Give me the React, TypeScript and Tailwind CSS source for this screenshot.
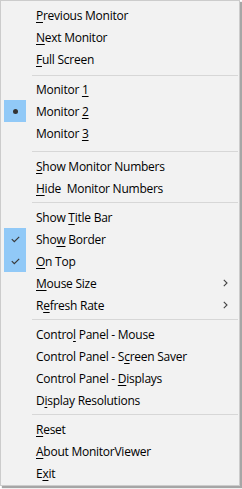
import type { ReactNode } from 'react'

type Mark = 'check' | 'dot' | null

type Item =
    | { kind: 'item'; pre: string; key: string; post: string; mark?: Mark; sub?: boolean }
    | { kind: 'sep'; top: string; bottom: string }

// mnemonic split: pre + underlined key + post
const items: Item[] = [
    { kind: 'item', pre: '', key: 'P', post: 'revious Monitor' },
    { kind: 'item', pre: '', key: 'N', post: 'ext Monitor' },
    { kind: 'item', pre: '', key: 'F', post: 'ull Screen' },
    { kind: 'sep', top: 'pt-[5px]', bottom: 'pb-[2px]' },
    { kind: 'item', pre: 'Monitor ', key: '1', post: '' },
    { kind: 'item', pre: 'Monitor ', key: '2', post: '', mark: 'dot' },
    { kind: 'item', pre: 'Monitor ', key: '3', post: '' },
    { kind: 'sep', top: 'pt-[7px]', bottom: 'pb-[3px]' },
    { kind: 'item', pre: '', key: 'S', post: 'how Monitor Numbers' },
    { kind: 'item', pre: '', key: 'H', post: 'ide  Monitor Numbers' },
    { kind: 'sep', top: 'pt-[3px]', bottom: 'pb-[3px]' },
    { kind: 'item', pre: 'Show ', key: 'T', post: 'itle Bar' },
    { kind: 'item', pre: 'Sho', key: 'w', post: ' Border', mark: 'check' },
    { kind: 'item', pre: '', key: 'O', post: 'n Top', mark: 'check' },
    { kind: 'item', pre: '', key: 'M', post: 'ouse Size', sub: true },
    { kind: 'item', pre: 'R', key: 'e', post: 'fresh Rate', sub: true },
    { kind: 'sep', top: 'pt-[3px]', bottom: 'pb-[3px]' },
    { kind: 'item', pre: 'Contro', key: 'l', post: ' Panel - Mouse' },
    { kind: 'item', pre: 'Control Panel - S', key: 'c', post: 'reen Saver' },
    { kind: 'item', pre: 'Control Panel - ', key: 'D', post: 'isplays' },
    { kind: 'item', pre: 'D', key: 'i', post: 'splay Resolutions' },
    { kind: 'sep', top: 'pt-[3px]', bottom: 'pb-[3px]' },
    { kind: 'item', pre: '', key: 'R', post: 'eset' },
    { kind: 'item', pre: '', key: 'A', post: 'bout MonitorViewer' },
    { kind: 'item', pre: 'E', key: 'x', post: 'it' },
]

function MarkIcon({ mark }: { mark?: Mark }) {
    if (mark === 'dot') {
        return <div className="h-[5px] w-[5px] rounded-full bg-[#333]" />
    }
    if (mark === 'check') {
        return (
            <svg width="9" height="7" viewBox="0 0 9 7" fill="none">
                <path d="M0.8 3.2 L3.3 5.7 L8.2 0.8" stroke="#3a3a3a" strokeWidth="1.2" />
            </svg>
        )
    }
    return null
}

function Chevron() {
    return (
        <svg width="5" height="8" viewBox="0 0 5 8" fill="none">
            <path d="M0.8 0.8 L4 4 L0.8 7.2" stroke="#444" strokeWidth="1.1" />
        </svg>
    )
}

function Row({ item }: { item: Extract<Item, { kind: 'item' }> }): ReactNode {
    return (
        <div className="flex h-[22px] items-center">
            <div
                className={
                    item.mark
                        ? 'flex h-[22px] w-[22px] items-center justify-center bg-[#91c9f7]'
                        : 'h-[22px] w-[22px]'
                }
            >
                <MarkIcon mark={item.mark} />
            </div>
            <span className="ml-[10px] flex-1 whitespace-pre pt-[2px] text-[12px] leading-none tracking-[-0.25px] text-black">
                {item.pre}
                <span className="underline decoration-1 underline-offset-[2px]">{item.key}</span>
                {item.post}
            </span>
            {item.sub && (
                <div className="mr-[11px] flex items-center">
                    <Chevron />
                </div>
            )}
        </div>
    )
}

export default function App() {
    return (
        <div
            className="h-[489px] w-[242px] bg-white"
            style={{ fontFamily: '"Open Sans", "Noto Sans", sans-serif' }}
        >
            <div className="h-[486px] w-[240px] border border-[#cccccc] bg-[#f2f2f2] pl-[3px] pt-[3px] shadow-[2px_2px_1px_rgba(0,0,0,0.35)]">
                {items.map((item, i) =>
                    item.kind === 'sep' ? (
                        <div key={i} className={`${item.top} ${item.bottom}`}>
                            <div className="ml-[28px] mr-[1px] h-px bg-[#d7d7d7]" />
                        </div>
                    ) : (
                        <Row key={i} item={item} />
                    ),
                )}
            </div>
        </div>
    )
}
